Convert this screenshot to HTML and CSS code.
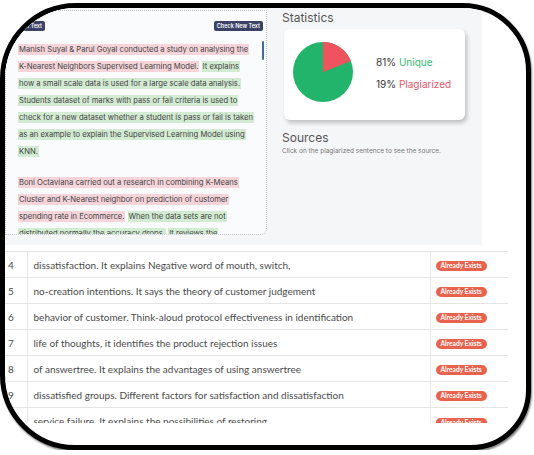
FILE: index.html
```html
<!DOCTYPE html>
<html lang="en">
<head>
  <meta charset="UTF-8">
  <title>Plagiarism Checker</title>
  <link rel="stylesheet" href="styles.css">
</head>
<body>
  <div class="frame">
    <div class="top">
      <div class="editor">
        <div class="toolbar">
          <button class="btn">Edit Text</button>
          <button class="btn">Check New Text</button>
        </div>
        <div class="doc">
          <div class="text">
            <p>
              <span class="plag">Manish Suyal &amp; Parul Goyal conducted a study on analysing the K-Nearest Neighbors Supervised Learning Model.</span>
              <span class="ok">It explains how a small scale data is used for a large scale data analysis.</span>
              <span class="ok">Students dataset of marks with pass or fail criteria is used to check for a new dataset whether a student is pass or fail is taken as an example to explain the Supervised Learning Model using KNN.</span>
            </p>
            <p>
              <span class="plag">Boni Octaviana carried out a research in combining K-Means Cluster and K-Nearest neighbor on prediction of customer spending rate in Ecommerce.</span>
              <span class="ok">When the data sets are not distributed normally the accuracy drops.</span>
              <span class="ok">It reviews the clustering of customers.</span>
            </p>
          </div>
          <div class="scroll"><div class="thumb"></div></div>
        </div>
      </div>

      <div class="side">
        <h3>Statistics</h3>
        <div class="card">
          <svg class="pie" width="60" height="60" viewBox="0 0 60 60">
            <circle cx="30" cy="30" r="30" fill="#22b46a"/>
            <path d="M30 30 L30 0 A30 30 0 0 1 57.9 18.96 Z" fill="#ef535d"/>
          </svg>
          <div class="legend">
            <div>81% <span class="green">Unique</span></div>
            <div>19% <span class="red">Plagiarized</span></div>
          </div>
        </div>
        <h3 class="sources">Sources</h3>
        <p class="hint">Click on the plagiarized sentence to see the source.</p>
      </div>
    </div>

    <div class="results">
      <table>
        <tr><td class="num">4</td><td>dissatisfaction. It explains Negative word of mouth, switch,</td><td class="st"><span class="badge">Already Exists</span></td></tr>
        <tr><td class="num">5</td><td>no-creation intentions. It says the theory of customer judgement</td><td class="st"><span class="badge">Already Exists</span></td></tr>
        <tr><td class="num">6</td><td>behavior of customer. Think-aloud protocol effectiveness in identification</td><td class="st"><span class="badge">Already Exists</span></td></tr>
        <tr><td class="num">7</td><td>life of thoughts, it identifies the product rejection issues</td><td class="st"><span class="badge">Already Exists</span></td></tr>
        <tr><td class="num">8</td><td>of answertree. It explains the advantages of using answertree</td><td class="st"><span class="badge">Already Exists</span></td></tr>
        <tr><td class="num">9</td><td>dissatisfied groups. Different factors for satisfaction and dissatisfaction</td><td class="st"><span class="badge">Already Exists</span></td></tr>
        <tr><td class="num">10</td><td>service failure. It explains the possibilities of restoring</td><td class="st"><span class="badge">Already Exists</span></td></tr>
      </table>
    </div>
  </div>
</body>
</html>
```

FILE: styles.css
```css
* {
  box-sizing: border-box;
}

body {
  margin: 0;
  background: white;
  font-family: Inter, "Noto Sans", sans-serif;
}

.frame {
  width: 531px;
  height: 447px;
  margin-top: 3px;
  border: 5px solid #000;
  border-radius: 76px 68px 60px 75px;
  overflow: hidden;
  background: white;
  box-shadow: 1px 2px 2px rgba(0,0,0,0.5);
}

.top {
  display: flex;
  width: 477px;
  height: 237px;
  background: #f5f6f8;
}

/* left text panel */
.editor {
  width: 262px;
  height: 225px;
  margin-top: 2px;
  background: #fafbfc;
  border: 1px dotted #bfc4ca;
  border-radius: 0 0 6px 0;
  display: flex;
  flex-direction: column;
  overflow: hidden;
}

.toolbar {
  display: flex;
  justify-content: space-between;
  padding: 10px 3px 0 10px;
}

.btn {
  font-family: Inter, sans-serif;
  font-size: 5.5px;
  font-weight: 600;
  color: white;
  background: #3b4266;
  border: none;
  border-radius: 2px;
  padding: 2px 3px;
  height: 10px;
}

.doc {
  display: flex;
  flex: 1;
  margin-top: 10px;
  overflow: hidden;
}

.text {
  flex: 1;
  padding-left: 12px;
  padding-right: 8px;
  font-size: 7.65px;
  line-height: 17px;
  color: #444;
}

.text p {
  margin: 0 0 14px;
}

.plag, .ok {
  padding: 1px;
  -webkit-box-decoration-break: clone;
  box-decoration-break: clone;
}

.plag {
  background: #f5d4da;
}

.ok {
  background: #d2ebd2;
}

.scroll {
  width: 4px;
}

.thumb {
  width: 2px;
  height: 19px;
  background: #3f6f96;
  border-radius: 1px;
}

/* right side */
.side {
  flex: 1;
  padding: 3px 0 0 15px;
  color: #555;
}

.side h3 {
  margin: 0;
  font-size: 12px;
  font-weight: 400;
  line-height: 14px;
}

.card {
  width: 181px;
  height: 91px;
  margin: 4px 0 0 2px;
  background: white;
  border-radius: 6px;
  box-shadow: 2px 3px 4px rgba(0,0,0,0.22);
  display: flex;
  align-items: flex-start;
  padding: 13px 0 0 9px;
}

.legend {
  margin: 9px 0 0 23px;
  font-size: 10px;
  line-height: 22px;
  color: #333;
}

.green {
  color: #3bb874;
}

.red {
  color: #e5566a;
}

.sources {
  margin-top: 11px !important;
}

.hint {
  margin: 2px 0 0;
  font-size: 6.5px;
  color: #777;
}

/* results table */
.results {
  margin-top: 6px;
  height: 172px;
  overflow: hidden;
}

table {
  width: 503px;
  border-collapse: collapse;
  font-family: Lato, sans-serif;
  font-size: 10px;
  color: #4a4a4a;
}

td {
  height: 26px;
  border-top: 1px solid #e4e4e4;
  padding: 0 0 0 6px;
}

td + td {
  border-left: 1px solid #e8e8e8;
}

.num {
  width: 22px;
  padding-left: 3px;
}

.st {
  width: 78px;
  padding-left: 5px;
}

.badge {
  display: inline-block;
  font-size: 6.6px;
  font-weight: 700;
  color: white;
  background: #e9624e;
  border-radius: 5px;
  padding: 1px 5px;
  line-height: 7.5px;
}
```
